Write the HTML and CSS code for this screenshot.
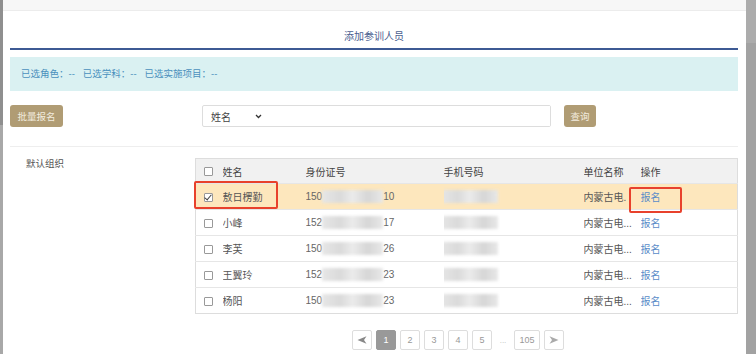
FILE: index.html
```html
<!DOCTYPE html>
<html lang="zh-CN">
<head>
    <meta charset="UTF-8">
    <title>添加参训人员</title>
    <link rel="stylesheet" href="styles.css">
</head>
<body>
    <div class="edge-left"></div>
    <div class="page">
        <div class="topbar"></div>
        <div class="panel">
            <div class="title">添加参训人员</div>
            <div class="selected">已选角色：--&nbsp;&nbsp;&nbsp;已选学科：--&nbsp;&nbsp;&nbsp;已选实施项目：--</div>
            <div class="toolbar">
                <button class="btn">批量报名</button>
                <div class="search">
                    <div class="search-type">姓名
                        <svg width="7" height="5" viewBox="0 0 7 5"><path d="M1 1 L3.5 3.5 L6 1" fill="none" stroke="#333" stroke-width="1.3"/></svg>
                    </div>
                    <input class="search-input" type="text">
                </div>
                <button class="btn btn-query">查询</button>
            </div>
            <div class="content">
                <div class="org">默认组织</div>
                <div class="list">
                    <div class="table-wrap">
                        <table class="grid">
                            <colgroup>
                                <col style="width:27px"><col style="width:83px"><col style="width:138px">
                                <col style="width:140px"><col style="width:57px"><col>
                            </colgroup>
                            <thead>
                                <tr><th><span class="cb"></span></th><th>姓名</th><th>身份证号</th><th>手机号码</th><th>单位名称</th><th>操作</th></tr>
                            </thead>
                            <tbody>
                                <tr class="active">
                                    <td><span class="cb checked"></span></td><td>敖日楞勤</td>
                                    <td><span class="id">150<span class="blur"></span>10</span></td>
                                    <td><span class="blur phone"></span></td>
                                    <td>内蒙古电.</td><td><a class="op">报名</a></td>
                                </tr>
                                <tr>
                                    <td><span class="cb"></span></td><td>小峰</td>
                                    <td><span class="id">152<span class="blur"></span>17</span></td>
                                    <td><span class="blur phone"></span></td>
                                    <td>内蒙古电...</td><td><a class="op">报名</a></td>
                                </tr>
                                <tr>
                                    <td><span class="cb"></span></td><td>李芙</td>
                                    <td><span class="id">150<span class="blur"></span>26</span></td>
                                    <td><span class="blur phone"></span></td>
                                    <td>内蒙古电...</td><td><a class="op">报名</a></td>
                                </tr>
                                <tr>
                                    <td><span class="cb"></span></td><td>王翼玲</td>
                                    <td><span class="id">152<span class="blur"></span>23</span></td>
                                    <td><span class="blur phone"></span></td>
                                    <td>内蒙古电...</td><td><a class="op">报名</a></td>
                                </tr>
                                <tr>
                                    <td><span class="cb"></span></td><td>杨阳</td>
                                    <td><span class="id">150<span class="blur"></span>23</span></td>
                                    <td><span class="blur phone"></span></td>
                                    <td>内蒙古电...</td><td><a class="op">报名</a></td>
                                </tr>
                            </tbody>
                        </table>
                        <div class="mark mark-name"></div>
                        <div class="mark mark-op"></div>
                    </div>
                    <div class="pager">
                        <span class="pg"><svg width="10" height="8" viewBox="0 0 10 8"><path d="M0.5 4 L9.5 0.3 L7 4 L9.5 7.7 Z" fill="#888"/></svg></span>
                        <span class="pg current">1</span>
                        <span class="pg">2</span>
                        <span class="pg">3</span>
                        <span class="pg">4</span>
                        <span class="pg">5</span>
                        <span class="pg-dots">...</span>
                        <span class="pg pg-wide">105</span>
                        <span class="pg"><svg width="10" height="8" viewBox="0 0 10 8"><path d="M9.5 4 L0.5 0.3 L3 4 L0.5 7.7 Z" fill="#aaa"/></svg></span>
                    </div>
                </div>
            </div>
        </div>
    </div>
    <div class="scrollbar"><div class="scroll-top"></div></div>
</body>
</html>
```

FILE: styles.css
```css
body {
    margin: 0;
    height: 354px;
    overflow: hidden;
    display: flex;
    font-family: "Liberation Sans", "Noto Sans CJK SC", sans-serif;
    font-size: 10px;
    color: #444;
    background: #fff;
}
.edge-left {
    width: 3px;
    background: linear-gradient(#8f8f8f 0, #8f8f8f 125px, #a8a8a8 125px);
}
.page {
    flex: 1;
    display: flex;
    flex-direction: column;
}
.topbar {
    height: 10px;
    background: #f7f7f7;
    border-bottom: 1px solid #ececec;
}
.panel {
    padding: 0 8px 0 7px;
}
.title {
    padding: 19px 0 4px;
    line-height: 14px;
    text-align: center;
    color: #4a6090;
    font-size: 10px;
    border-bottom: 2px solid #3d5a94;
}
.selected {
    margin-top: 7px;
    height: 34px;
    line-height: 34px;
    padding-left: 11px;
    background: #daf1f2;
    color: #4a90bd;
    font-size: 9.5px;
}
.toolbar {
    display: flex;
    align-items: center;
    margin-top: 14px;
    height: 22px;
}
.btn {
    height: 22px;
    width: 53px;
    padding: 0;
    border: none;
    border-radius: 3px;
    background: #b09c74;
    color: #f3ecdf;
    font-family: inherit;
    font-size: 9.5px;
}
.btn-query {
    width: 32px;
    margin-left: 13px;
}
.search {
    display: flex;
    margin-left: 139px;
    width: 349px;
    height: 22px;
    box-sizing: border-box;
    border: 1px solid #ddd;
    border-radius: 2px;
}
.search-type {
    width: 64px;
    padding-left: 8px;
    display: flex;
    align-items: center;
    gap: 24px;
    box-sizing: border-box;
    color: #444;
}
.search-input {
    flex: 1;
    border: none;
    outline: none;
}
.content {
    display: flex;
    margin-top: 19px;
    border-top: 1px solid #eee;
}
.org {
    width: 169px;
    padding: 11px 0 0 16px;
    line-height: 12px;
    color: #555;
    font-size: 9.5px;
}
.list {
    flex: 1;
    padding-top: 11px;
}
.table-wrap {
    position: relative;
}
.grid {
    width: 100%;
    border-collapse: collapse;
    table-layout: fixed;
    border: 1px solid #ddd;
}
.grid th, .grid td {
    padding: 0;
    text-align: left;
    white-space: nowrap;
    overflow: hidden;
}
.grid th {
    height: 24px;
    background: #f1f1f1;
    font-weight: normal;
    color: #444;
}
.grid td {
    height: 25px;
    border-top: 1px solid #e6e6e6;
    color: #555;
}
.grid tr.active td {
    background: #fde7bd;
}
.grid th:first-child, .grid td:first-child {
    padding-left: 8px;
}
.cb {
    display: inline-block;
    width: 7px;
    height: 7px;
    border: 1px solid #999;
    border-radius: 1px;
    vertical-align: middle;
    background: #fff;
    position: relative;
}
.cb.checked::after {
    content: "";
    position: absolute;
    left: 1px;
    top: -1px;
    width: 3px;
    height: 6px;
    border: solid #444;
    border-width: 0 1.5px 1.5px 0;
    transform: rotate(40deg);
}
.id {
    display: inline-flex;
    align-items: center;
    color: #666;
}
.blur {
    display: inline-block;
    width: 61px;
    height: 13px;
    background: linear-gradient(90deg, #e6e6e6, #dadada 30%, #ebebeb 50%, #d6d6d6 75%, #e8e8e8);
    filter: blur(1.5px);
}
.blur.phone {
    width: 57px;
    margin-left: -3px;
    vertical-align: middle;
}
.op {
    color: #5a8cc8;
}
.mark {
    position: absolute;
    border: 2px solid #e8412c;
    border-radius: 2px;
}
.mark-name {
    left: -1px;
    top: 23px;
    width: 80px;
    height: 24px;
}
.mark-op {
    left: 434px;
    top: 29px;
    width: 49px;
    height: 22px;
}
.pager {
    display: flex;
    align-items: center;
    gap: 4px;
    margin: 16px 0 0 157px;
}
.pg {
    width: 20px;
    height: 20px;
    box-sizing: border-box;
    border: 1px solid #ddd;
    border-radius: 2px;
    display: flex;
    align-items: center;
    justify-content: center;
    color: #999;
    font-size: 9px;
}
.pg.current {
    background: #999;
    border-color: #999;
    color: #fff;
}
.pg-wide {
    width: 26px;
}
.pg-dots {
    width: 14px;
    text-align: center;
    color: #bbb;
    font-size: 8px;
}
.scrollbar {
    width: 10px;
    background: #a2a2a2;
}
.scroll-top {
    height: 43px;
    background: #acacac;
}
```
